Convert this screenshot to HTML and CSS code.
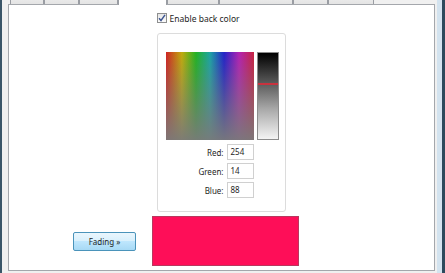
FILE: index.html
```html
<!DOCTYPE html>
<html lang="en">
<head>
  <meta charset="UTF-8">
  <title>Back color</title>
  <link rel="stylesheet" href="styles.css">
</head>
<body>
  <div class="win-left"></div>
  <div class="dialog">
    <div class="tabs">
      <div class="tab" style="width: 34px"></div>
      <div class="tab" style="width: 35px"></div>
      <div class="tab" style="width: 39px"></div>
      <div class="tab tab-active" style="width: 49px"></div>
      <div class="tab" style="width: 52px"></div>
      <div class="tab" style="width: 74px"></div>
      <div class="tab" style="width: 35px"></div>
      <div class="tab" style="width: 46px"></div>
    </div>
    <div class="panel">
      <div class="picker-col">
        <label class="enable">
          <span class="checkbox">
            <svg width="8" height="8" viewBox="0 0 8 8"><path d="M1 4.2 L3 6.5 L7 0.8" fill="none" stroke="#3d5591" stroke-width="1.4"/></svg>
          </span>
          Enable back color
        </label>
        <div class="picker-box">
          <div class="picker-top">
            <div class="spectrum"></div>
            <div class="slider"><div class="slider-mark"></div></div>
          </div>
          <div class="rgb-rows">
            <div class="rgb-row"><span>Red:</span><div class="num">254</div></div>
            <div class="rgb-row"><span>Green:</span><div class="num">14</div></div>
            <div class="rgb-row"><span>Blue:</span><div class="num">88</div></div>
          </div>
        </div>
      </div>
      <div class="bottom-row">
        <button class="fading">Fading &raquo;</button>
        <div class="swatch"></div>
      </div>
    </div>
  </div>
  <div class="win-right"></div>
</body>
</html>
```

FILE: styles.css
```css
body {
  margin: 0;
  width: 445px;
  height: 273px;
  display: flex;
  overflow: hidden;
  font-family: "Noto Sans", "Open Sans", sans-serif;
  font-size: 8px;
  color: #1e1e1e;
  background-color: #f0f0f0;
}

.win-left {
  width: 2px;
  background-color: #3a5568;
}

.win-right {
  width: 3px;
  border-left: 5px solid #d3e3ef;
  background-color: #2c4a5c;
}

.dialog {
  width: 435px;
  display: flex;
  flex-direction: column;
}

/* tab strip, mostly scrolled out of view */
.tabs {
  height: 5px;
  margin-left: 8px;
  display: flex;
  align-items: flex-end;
  overflow: hidden;
  position: relative;
  z-index: 1;
  margin-bottom: -1px;
}

.tab {
  box-sizing: border-box;
  height: 16px;
  border: 1px solid #9a9da3;
  border-bottom: none;
  background: linear-gradient(#f6f6f6, #e4e4e4);
  margin-bottom: 1px;
}

.tab-active {
  background: #fff;
  height: 18px;
  margin-bottom: 0;
}

.panel {
  box-sizing: border-box;
  width: 427px;
  height: 267px;
  margin-left: 6px;
  border: 1px solid #a4a7ac;
  background-color: #fff;
  display: flex;
  flex-direction: column;
  align-items: center;
  padding-top: 8px;
}

.picker-col {
  width: 129px;
  margin-left: -1px;
}

.enable {
  display: flex;
  align-items: center;
  height: 10px;
  gap: 3px;
  font-size: 8.5px;
}

.checkbox {
  box-sizing: border-box;
  width: 10px;
  height: 10px;
  border: 1px solid #8e8f8f;
  background: linear-gradient(#e6e6e6, #fbfbfb);
  display: flex;
  align-items: center;
  justify-content: center;
}

.picker-box {
  box-sizing: border-box;
  width: 129px;
  height: 179px;
  margin-top: 10px;
  border: 1px solid #dcdcdc;
  border-radius: 3px;
  padding: 18px 6px 0 8px;
}

.picker-top {
  display: flex;
  gap: 3px;
}

.spectrum {
  width: 88px;
  height: 88px;
  background:
    linear-gradient(rgba(128, 128, 128, 0.1), rgba(122, 122, 122, 0.95)),
    linear-gradient(to right, #d81818, #c8b000 18%, #18b818 34%, #10a8a8 50%, #1818d0 66%, #b818b8 83%, #d01838);
}

.slider {
  box-sizing: border-box;
  width: 22px;
  height: 88px;
  border: 1px solid #8c8c8c;
  background: linear-gradient(#000, #5a5a5a 35%, #a8a8a8 65%, #f4f4f4);
  padding-top: 30px;
}

.slider-mark {
  height: 2px;
  background-color: #c8323e;
}

.rgb-rows {
  width: 88px;
  margin-top: 4px;
  display: flex;
  flex-direction: column;
  gap: 3px;
}

.rgb-row {
  display: flex;
  justify-content: flex-end;
  align-items: center;
  gap: 3px;
}

.num {
  box-sizing: border-box;
  width: 27px;
  height: 16px;
  border: 1px solid #d0d0d0;
  padding-left: 3px;
  line-height: 14px;
}

.bottom-row {
  align-self: flex-start;
  margin-left: 64px;
  margin-top: 4px;
  display: flex;
  align-items: center;
  gap: 16px;
}

.fading {
  box-sizing: border-box;
  width: 63px;
  height: 19px;
  margin-top: 1px;
  border: 1px solid #4a93ba;
  border-radius: 2px;
  background: linear-gradient(#eaf6fd, #d9f0fc 45%, #bee6fd 50%, #a7d9f5);
  font-family: inherit;
  font-size: 8px;
  color: #1e1e1e;
  padding: 0;
}

.swatch {
  box-sizing: border-box;
  width: 147px;
  height: 50px;
  background-color: #fe0e58;
  border: 1px solid #b8385e;
}
```
